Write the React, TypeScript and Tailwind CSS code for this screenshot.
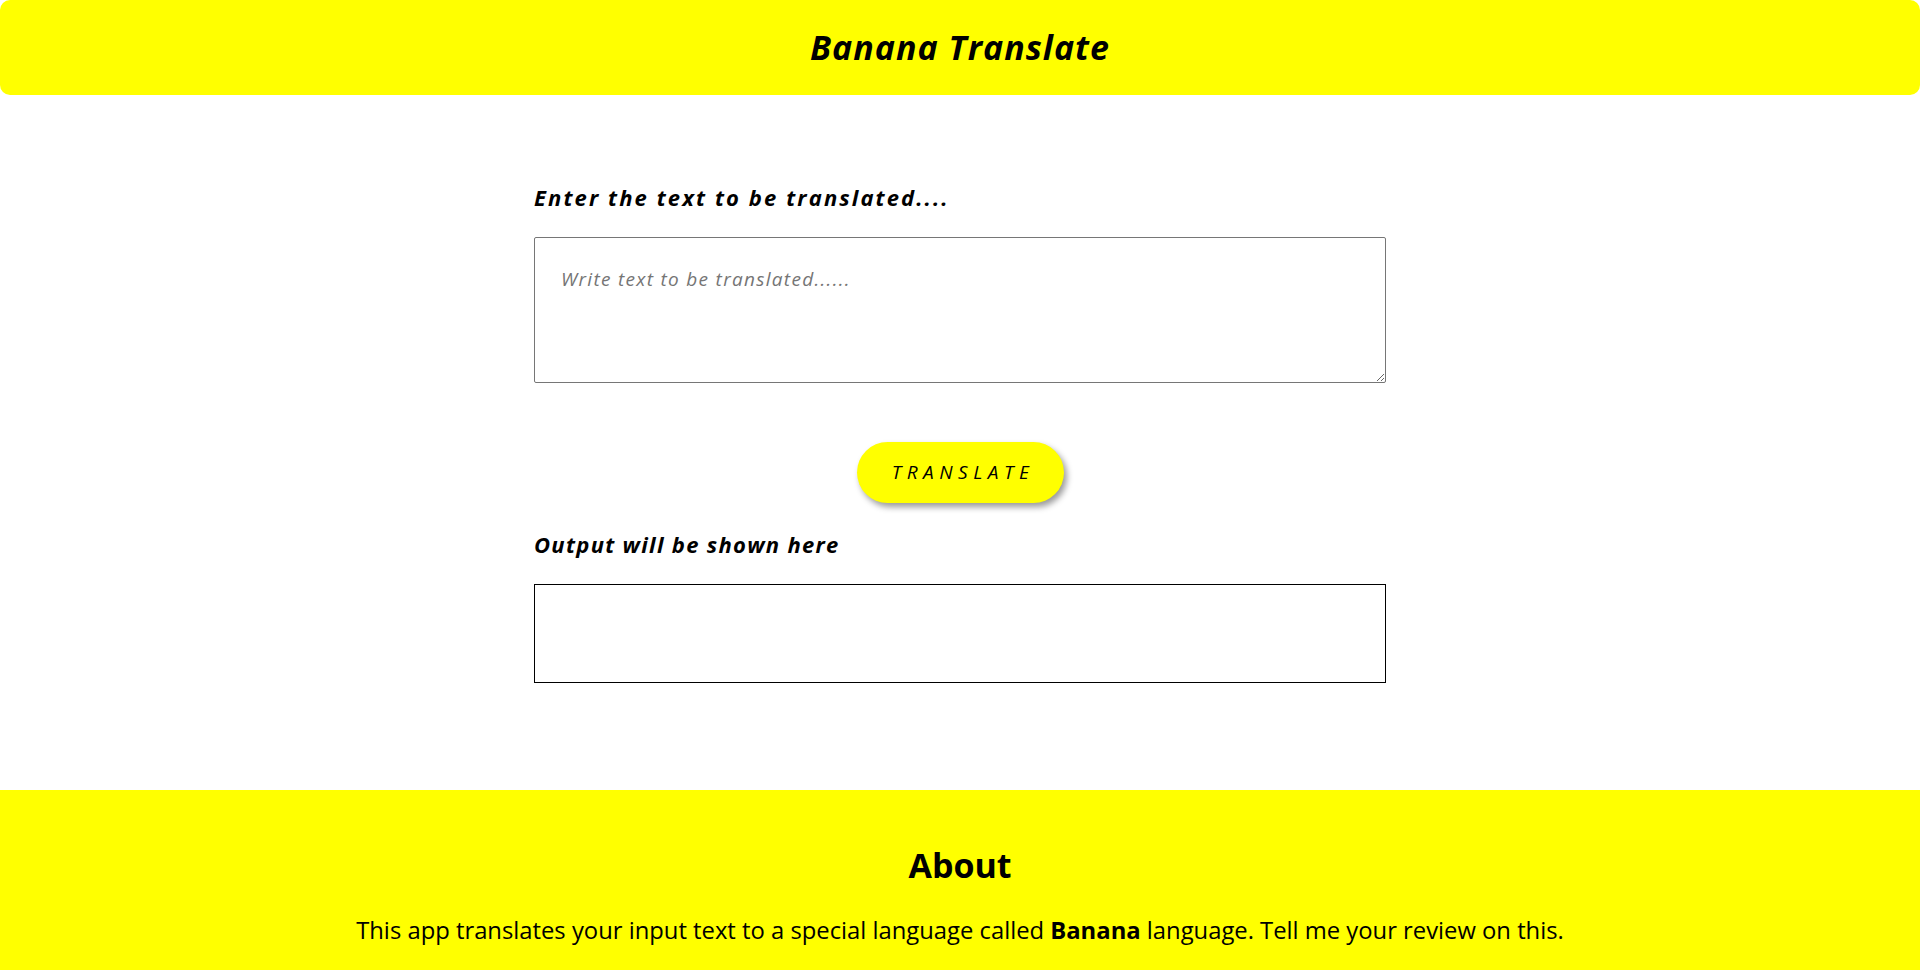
import { useState } from "react";

const font = { fontFamily: '"Comic Sans MS", "Open Sans", "DejaVu Sans", sans-serif' };

export default function App() {
  const [text, setText] = useState("");
  const [output, setOutput] = useState("");

  const handleTranslate = () => {
    setOutput(text);
  };

  return (
    <div className="min-h-screen bg-white text-black" style={font}>
      <header className="h-[95px] bg-[#ffff00] rounded-[10px] flex items-center justify-center">
        <h1 className="text-[34px] font-bold italic tracking-[1px]">Banana Translate</h1>
      </header>

      <main className="w-[852px] mx-auto pt-[88px] pb-[107px] flex flex-col">
        <label htmlFor="input" className="text-[22px] leading-[28px] font-bold italic tracking-[2.1px]">
          Enter the text to be translated....
        </label>
        <textarea
          id="input"
          value={text}
          onChange={(e) => setText(e.target.value)}
          placeholder="Write text to be translated......"
          className="mt-[26px] h-[146px] w-full border border-[#767676] rounded-[2px] px-[26px] pt-[27px] pb-[20px] text-[19px] italic tracking-[1.3px] placeholder:text-[#757575] outline-none"
          style={font}
        />
        <button
          onClick={handleTranslate}
          className="mt-[59px] self-center w-[207px] h-[61px] rounded-full bg-[#ffff00] pl-[6px] text-[19px] italic tracking-[5.5px] shadow-[3px_4px_6px_rgba(0,0,0,0.4)]"
          style={font}
        >
          TRANSLATE
        </button>
        <h3 className="mt-[27px] text-[22px] leading-[28px] font-bold italic tracking-[1.3px]">
          Output will be shown here
        </h3>
        <div className="mt-[26px] h-[99px] w-full border border-black p-4 text-[18px]">{output}</div>
      </main>

      <footer className="bg-[#ffff00] pt-[55px] pb-[60px] text-center">
        <h2 className="text-[34px] leading-[40px] font-bold">About</h2>
        <p className="mt-[30px] text-[23.8px] leading-[30px]">
          This app translates your input text to a special language called <strong>Banana</strong> language. Tell me
          your review on this.
        </p>
      </footer>
    </div>
  );
}
